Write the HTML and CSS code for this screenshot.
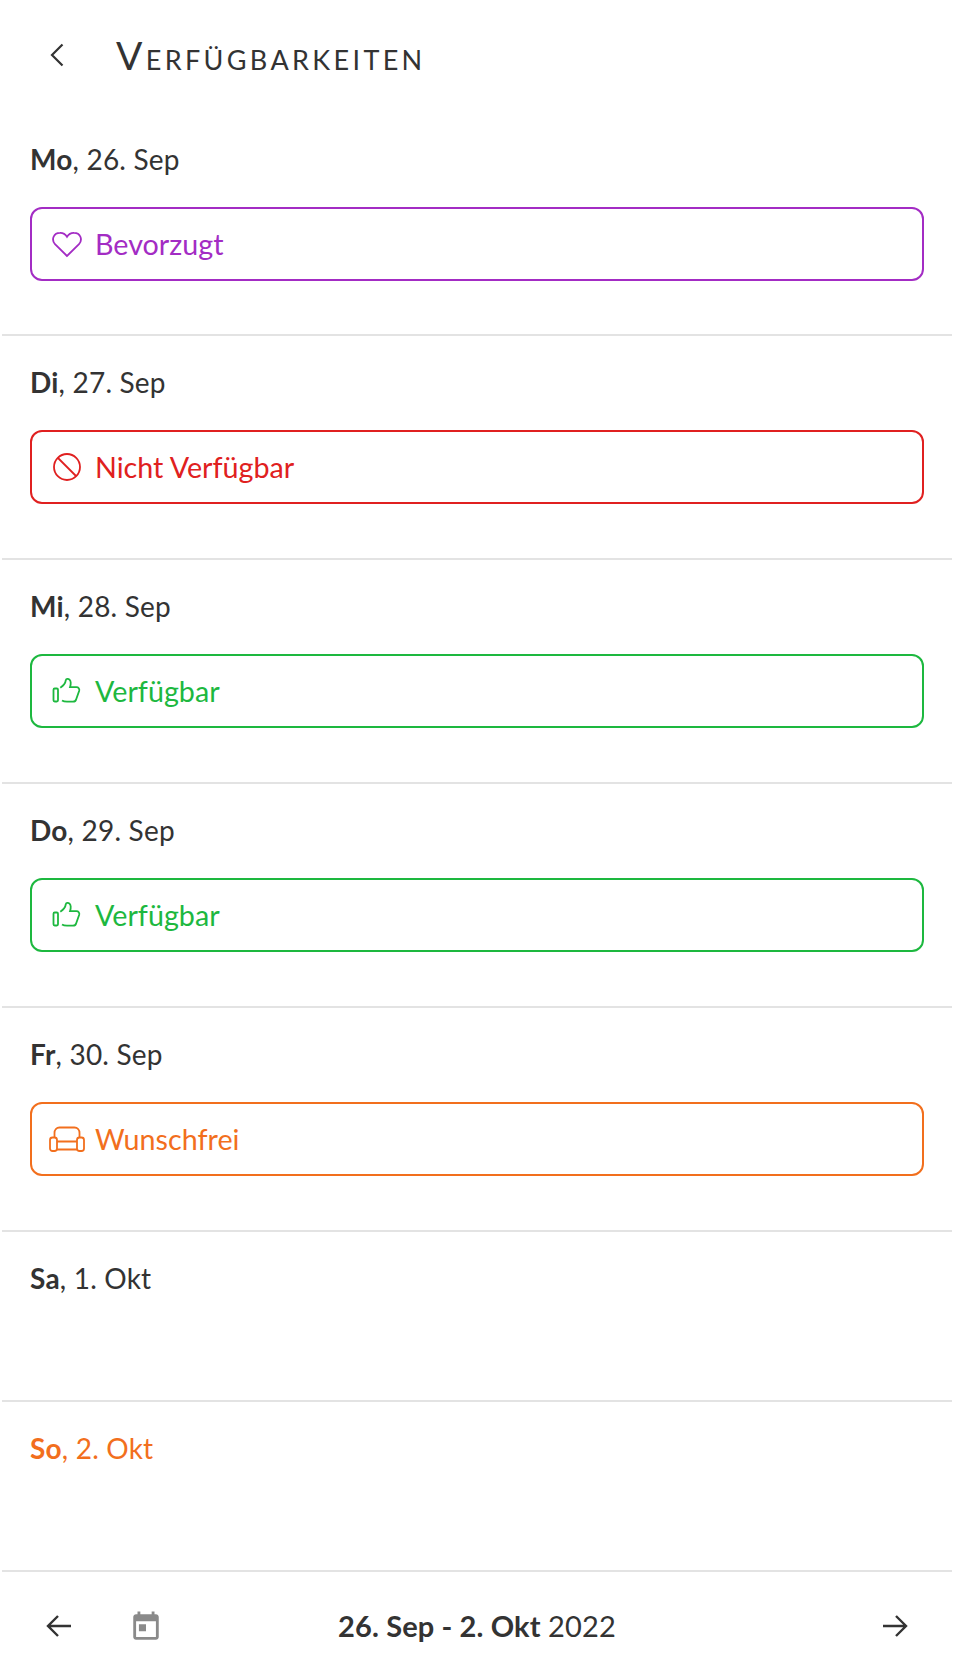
FILE: index.html
```html
<!DOCTYPE html>
<html lang="de">
<head>
<meta charset="utf-8">
<title>Verfügbarkeiten</title>
<link rel="stylesheet" href="styles.css">
</head>
<body>
<div class="page">
  <header class="topbar">
    <svg class="back" viewBox="0 0 14 24"><path d="M12.500 1.500 2 12l10.500 10.500"/></svg>
    <h1 class="title">Verfügbarkeiten</h1>
  </header>
  <main class="days">
    <section class="day">
      <p class="date"><b>Mo</b>, 26. Sep</p>
      <div class="status purple">
        <svg class="ico" viewBox="0 0 30 30"><path d="M15 27 3 15.200C-1 10.500 1.600 3.800 8 3.800c3-.1 5.500 1.500 7 4 1.500-2.500 4-4.100 7-4 6.400 0 9 6.700 5 11.400z"/></svg>
        <span>Bevorzugt</span>
      </div>
    </section>
    <section class="day">
      <p class="date"><b>Di</b>, 27. Sep</p>
      <div class="status red">
        <svg class="ico" viewBox="0 0 30 30"><circle cx="15" cy="15" r="13"/><path d="M6 6 24 24"/></svg>
        <span>Nicht Verfügbar</span>
      </div>
    </section>
    <section class="day">
      <p class="date"><b>Mi</b>, 28. Sep</p>
      <div class="status green">
        <svg class="ico" viewBox="0 0 30 30"><rect x="1.500" y="12.500" width="4.500" height="13" rx="1.200"/><path d="M10 24.500c1.500 1 3 1.200 5 1.200h6c1.700 0 2.800-1 3.200-2.500l3-8.500c.5-2-.8-3.500-2.700-3.500h-6.500c.8-2.500 1-6-.5-7.500-1.200-1.200-3.300-1-3.700.5-.3 2.600-2.300 5.500-5.500 7.500"/></svg>
        <span>Verfügbar</span>
      </div>
    </section>
    <section class="day">
      <p class="date"><b>Do</b>, 29. Sep</p>
      <div class="status green">
        <svg class="ico" viewBox="0 0 30 30"><rect x="1.500" y="12.500" width="4.500" height="13" rx="1.200"/><path d="M10 24.500c1.500 1 3 1.200 5 1.200h6c1.700 0 2.800-1 3.200-2.500l3-8.500c.5-2-.8-3.500-2.700-3.500h-6.500c.8-2.500 1-6-.5-7.500-1.200-1.200-3.300-1-3.700.5-.3 2.600-2.300 5.500-5.500 7.500"/></svg>
        <span>Verfügbar</span>
      </div>
    </section>
    <section class="day">
      <p class="date"><b>Fr</b>, 30. Sep</p>
      <div class="status orange">
        <svg class="ico sofa" viewBox="0 0 36 26"><path d="M5.500 11V7c0-3 2-5.500 5-5.500h15c3 0 5 2.500 5 5.500v4"/><rect x="1" y="11.500" width="7" height="13.500" rx="2.500"/><rect x="28" y="11.500" width="7" height="13.500" rx="2.500"/><path d="M8 15.500h20M8 23.500h20"/></svg>
        <span>Wunschfrei</span>
      </div>
    </section>
    <section class="day empty">
      <p class="date"><b>Sa</b>, 1. Okt</p>
    </section>
    <section class="day empty sunday">
      <p class="date"><b>So</b>, 2. Okt</p>
    </section>
  </main>
  <footer class="footer">
    <div class="left">
      <svg class="arrow" viewBox="0 0 26 24"><path d="M25 12H2M12 2 2 12l10 10"/></svg>
      <svg class="cal" viewBox="0 0 24 24"><path d="M19 3h-1V1h-2v2H8V1H6v2H5c-1.110 0-1.990.9-1.990 2L3 19c0 1.100.89 2 2 2h14c1.100 0 2-.9 2-2V5c0-1.100-.9-2-2-2zm0 16H5V8h14v11zM7 10h5v5H7z"/></svg>
    </div>
    <p class="range"><b>26. Sep - 2. Okt</b> 2022</p>
    <div class="right">
      <svg class="arrow" viewBox="0 0 26 24"><path d="M1 12h23M14 2l10 10-10 10"/></svg>
    </div>
  </footer>
</div>
</body>
</html>
```
FILE: styles.css
```css
* { box-sizing: border-box; }
html, body { margin: 0; padding: 0; background: #fff; }
body { font-family: "Lato", "Noto Sans", sans-serif; color: #333; }
.page { width: 954px; height: 1680px; display: flex; flex-direction: column; }
.topbar { height: 113px; display: flex; align-items: center; padding: 0 0 0 50px; gap: 52px; }
.back { width: 14px; height: 24px; margin-top: -3px; fill: none; stroke: #333; stroke-width: 2.200; }
.title { margin: 0; font-size: 39px; font-weight: 400; font-variant: small-caps; letter-spacing: 3.350px; line-height: 40px; margin-top: -3px; color: #333; }
.days { display: flex; flex-direction: column; padding: 0 2px; }
.day { height: 224px; border-bottom: 2px solid #e3e3e3; padding: 27px 28px 0; }
.day:first-child { height: 223px; }
.day.empty { height: 170px; }
.date { margin: 0; font-size: 28px; line-height: 38px; font-weight: 400; letter-spacing: .2px; }
.date b { font-weight: 700; }
.sunday { color: #f26f1d; }
.status { margin-top: 29px; height: 74px; border: 2px solid currentColor; border-radius: 12px; display: flex; align-items: center; padding: 0 0 0 20px; gap: 13px; font-size: 28.700px; }
.ico { width: 30px; height: 30px; fill: none; stroke: currentColor; stroke-width: 1.800; flex: none; }
.sofa { width: 36px; height: 26px; margin-left: -3px; margin-right: -3px; }
.purple { color: #a32cc4; }
.red { color: #e02020; }
.green { color: #1db83f; }
.orange { color: #f26f1d; }
.footer { flex: 1; display: grid; grid-template-columns: 1fr auto 1fr; align-items: center; padding: 0 46px; }
.left { display: flex; align-items: center; }
.right { display: flex; justify-content: flex-end; }
.arrow { width: 26px; height: 24px; fill: none; stroke: #333; stroke-width: 2.400; flex: none; }
.cal { width: 34px; height: 34px; fill: #8a8a8a; margin-left: 57px; margin-top: 2px; flex: none; }
.range { margin: 0; font-size: 29px; line-height: 40px; letter-spacing: .12px; }
```
